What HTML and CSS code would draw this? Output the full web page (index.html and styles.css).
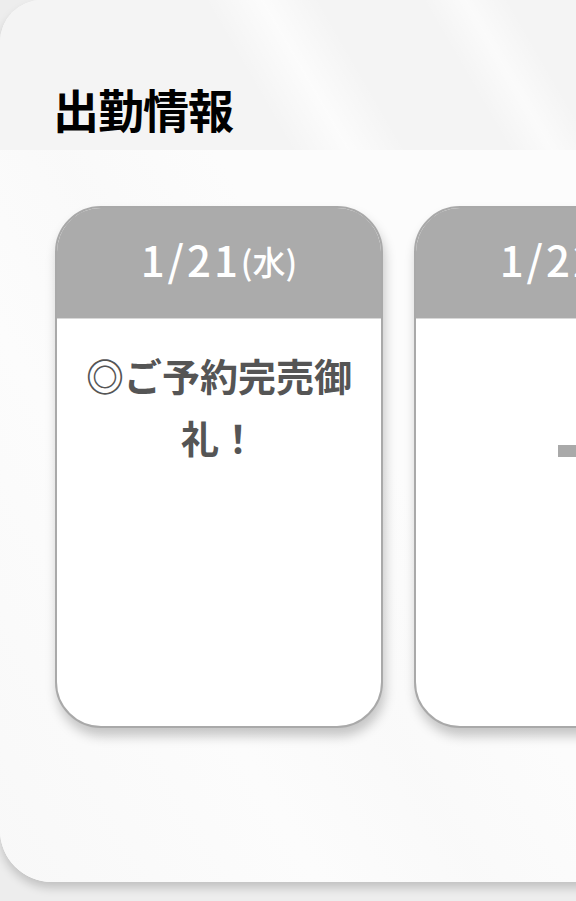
FILE: index.html
```html
<!DOCTYPE html>
<html lang="ja">
<head>
<meta charset="utf-8">
<link rel="stylesheet" href="styles.css">
</head>
<body>
<div class="page">
  <section class="panel">
    <div class="head">
      <h2 class="title">出勤情報</h2>
    </div>
    <div class="body">
      <div class="cards">
        <div class="card">
          <div class="card-head"><span class="date">1/21</span><span class="dow">(水)</span></div>
          <div class="card-body">
            <p class="msg">◎ご予約完売御礼！</p>
          </div>
        </div>
        <div class="card">
          <div class="card-head"><span class="date">1/22</span><span class="dow">(木)</span></div>
          <div class="card-body">
            <div class="dash"></div>
          </div>
        </div>
      </div>
    </div>
  </section>
</div>
</body>
</html>
```
FILE: styles.css
```css
html, body {
  margin: 0;
  padding: 0;
}
body {
  width: 576px;
  height: 901px;
  overflow: hidden;
  background: #ededed;
  font-family: "Noto Sans CJK JP", "Liberation Sans", sans-serif;
}
.page {
  width: 576px;
  height: 901px;
  overflow: hidden;
}
.panel {
  width: 640px;
  height: 882px;
  border-radius: 42px 0 0 52px;
  background: #fbfbfb;
  box-shadow: 0 6px 10px rgba(0, 0, 0, 0.18);
  overflow: hidden;
  display: flex;
  flex-direction: column;
}
.head {
  height: 150px;
  box-sizing: border-box;
  padding: 83px 0 0 53px;
  background:
    linear-gradient(60deg, rgba(255,255,255,0) 40%, rgba(255,255,255,0.7) 48%, rgba(255,255,255,0) 56%),
    linear-gradient(60deg, rgba(255,255,255,0) 70%, rgba(255,255,255,0.6) 76%, rgba(255,255,255,0) 82%),
    #f4f4f4;
}
.title {
  margin: 0;
  font-size: 46px;
  line-height: 50px;
  font-weight: 700;
  color: #000;
  letter-spacing: -1px;
}
.body {
  flex: 1;
  padding: 56px 0 0 55px;
  background:
    linear-gradient(60deg, rgba(244,244,244,0.5) 0%, rgba(255,255,255,0) 30%, rgba(247,247,247,0.5) 45%, rgba(255,255,255,0) 60%),
    #fcfcfc;
}
.cards {
  display: flex;
  gap: 31px;
}
.card {
  flex: 0 0 328px;
  height: 522px;
  box-sizing: border-box;
  border: 2px solid #a9a9a9;
  border-radius: 46px;
  background: #fff;
  overflow: hidden;
  display: flex;
  flex-direction: column;
  box-shadow: 2px 8px 12px rgba(0, 0, 0, 0.22);
}
.card-head {
  height: 110px;
  flex: 0 0 110px;
  background: #ababab;
  color: #fff;
  display: flex;
  align-items: center;
  justify-content: center;
  padding-bottom: 8px;
  box-sizing: border-box;
}
.date {
  font-size: 42px;
  font-weight: 500;
  letter-spacing: 3px;
  line-height: 1;
}
.dow {
  font-size: 33px;
  font-weight: 500;
  line-height: 1;
  margin-top: 4px;
}
.card-body {
  flex: 1;
  padding: 25px 20px 0;
  border-top: 1px solid #d8d8d8;
}
.msg {
  margin: 0;
  text-align: center;
  font-size: 38px;
  line-height: 62px;
  font-weight: 700;
  color: #555;
}
.dash {
  width: 40px;
  height: 12px;
  background: #a9a9a9;
  margin: 101px auto 0;
}
```
